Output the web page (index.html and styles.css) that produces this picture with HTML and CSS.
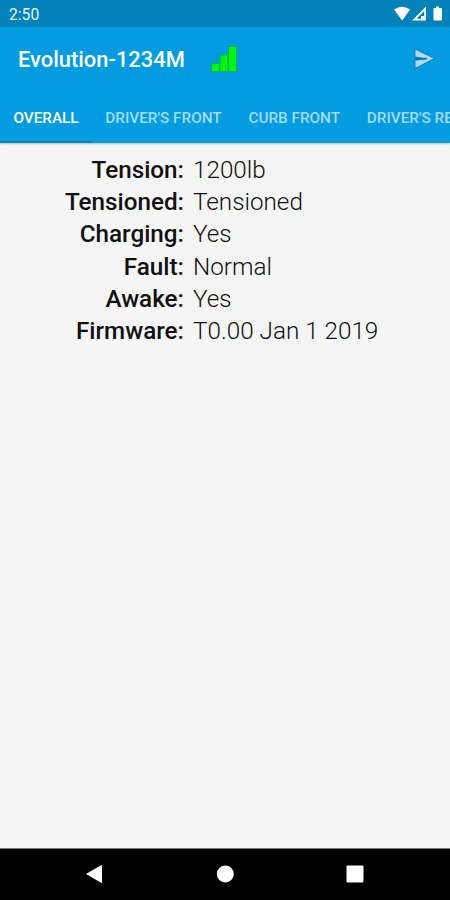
FILE: index.html
```html
<!DOCTYPE html>
<html lang="en">
<head>
<meta charset="utf-8">
<title>Evolution-1234M</title>
<link rel="stylesheet" href="styles.css">
</head>
<body>
<div class="status">
  <span class="clock">2:50</span>
  <svg class="status-icons" width="50" height="18" viewBox="0 0 50 18">
    <path fill="#fff" d="M0 4.500Q8 -1.200 16 4.500L8.200 15.500Z"/>
    <path fill="#fff" fill-rule="evenodd" d="M18 15.500L32 1.500V15.500ZM22.500 13.700H27V11H30.200V6Z"/>
    <path fill="#fff" d="M42 1.500h3v1.500h2q1 0 1 1V14.500q0 1-1 1h-6.500q-1 0-1-1V4q0-1 1-1H42Z"/>
  </svg>
</div>
<header class="header">
  <div class="toolbar">
    <h1 class="title">Evolution-1234M</h1>
    <svg class="signal" width="28" height="28" viewBox="0 0 28 28">
      <g fill="#00f512" stroke="#08ad45" stroke-width="1">
        <path d="M1.500 18.500h8v8h-8zM10 10h8v16.500h-8zM18.500 1.500h8v25h-8z"/>
      </g>
    </svg>
    <svg class="send" width="24" height="24" viewBox="0 0 24 24">
      <path d="M2 2L21.500 11.500L2 21.500V13.300L13.500 11.700L2 10Z" fill="#a6dcf8" stroke="#176d94" stroke-width=".8"/>
      <path d="M2 11.700H14" stroke="#176d94" stroke-width="1.300"/>
    </svg>
  </div>
  <nav class="tabs">
    <span class="tab active">OVERALL</span>
    <span class="tab">DRIVER'S FRONT</span>
    <span class="tab">CURB FRONT</span>
    <span class="tab">DRIVER'S REAR</span>
  </nav>
</header>
<main class="content">
  <dl class="readings">
    <dt>Tension:</dt><dd>1200lb</dd>
    <dt>Tensioned:</dt><dd>Tensioned</dd>
    <dt>Charging:</dt><dd>Yes</dd>
    <dt>Fault:</dt><dd>Normal</dd>
    <dt>Awake:</dt><dd>Yes</dd>
    <dt>Firmware:</dt><dd>T0.00 Jan 1 2019</dd>
  </dl>
</main>
<footer class="navbar">
  <svg width="20" height="20" viewBox="0 0 20 20"><path fill="#fff" d="M1 10L16 1.200q1-.5 1 .8V18q0 1.300-1 .8Z"/></svg>
  <svg width="20" height="20" viewBox="0 0 20 20"><circle cx="10.300" cy="10" r="8.500" fill="#fff"/></svg>
  <svg width="20" height="20" viewBox="0 0 20 20"><rect x="1.500" y="1.500" width="17" height="17" rx="1" fill="#fff"/></svg>
</footer>
</body>
</html>
```
FILE: styles.css
```css
* { box-sizing: border-box; }
body {
  margin: 0;
  height: 900px;
  display: flex;
  flex-direction: column;
  overflow: hidden;
  background: #f5f5f5;
  font-family: Roboto, sans-serif;
}
.status {
  height: 27px;
  flex: none;
  display: flex;
  justify-content: space-between;
  align-items: center;
  padding: 1px 6px 0 9px;
  background: #0182b9;
  color: #e6f5fc;
}
.status-icons { margin-bottom: 1px; }
.clock { font-size: 15.700px; }
.header {
  height: 116px;
  flex: none;
  background: #019bdf;
  color: #fff;
  box-shadow: 0 1px 2px rgba(0, 0, 0, .25);
}
.toolbar {
  height: 66px;
  display: flex;
  align-items: center;
  padding: 0 13px 0 18px;
}
.title {
  margin: 0;
  width: 192px;
  font-size: 21.900px;
  font-weight: 500;
  line-height: 26px;
}
.signal { margin-bottom: 2px; }
.send { margin-left: auto; margin-bottom: 2px; }
.tabs {
  height: 50px;
  display: flex;
  overflow: hidden;
  white-space: nowrap;
}
.tab {
  flex: none;
  padding: 0 13.400px;
  line-height: 50px;
  font-size: 15.300px;
  font-weight: 500;
  color: #a3dcf7;
}
.active {
  color: #fff;
  border-bottom: 2px solid #0182b9;
}
.content {
  flex: 1;
  padding-top: 11px;
}
.readings {
  margin: 0;
  display: grid;
  grid-template-columns: 184px 1fr;
  column-gap: 9px;
  grid-auto-rows: 32.200px;
  line-height: 32px;
  font-size: 24.250px;
  color: #111;
}
dt { text-align: right; font-weight: 500; }
dd { margin: 0; font-weight: 300; }
.navbar {
  height: 52px;
  flex: none;
  display: flex;
  justify-content: space-between;
  align-items: center;
  padding: 0 85px 2px;
  background: #000;
  border-top: 1px solid #777;
}
```
